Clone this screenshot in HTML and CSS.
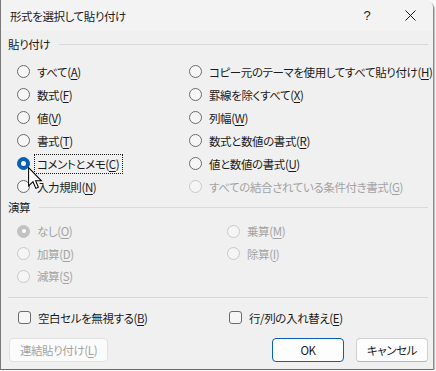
FILE: index.html
```html
<!DOCTYPE html>
<html lang="ja">
<head>
  <meta charset="UTF-8">
  <title>形式を選択して貼り付け</title>
  <link rel="stylesheet" href="styles.css">
</head>
<body>
  <div class="window">
    <div class="titlebar">
      <span class="title">形式を選択して貼り付け</span>
      <span class="help">?</span>
      <span class="close">
        <svg width="11" height="11" viewBox="0 0 11 11"><path d="M0.5 0.5 L10.5 10.5 M10.5 0.5 L0.5 10.5" stroke="#1a1a1a" stroke-width="1"/></svg>
      </span>
    </div>

    <div class="content">
      <div class="group-head"><span>貼り付け</span><i class="rule"></i></div>
      <div class="paste-grid">
        <label class="opt"><span class="radio"></span>すべて(<u>A</u>)</label>
        <label class="opt"><span class="radio"></span>コピー元のテーマを使用してすべて貼り付け(<u>H</u>)</label>
        <label class="opt"><span class="radio"></span>数式(<u>F</u>)</label>
        <label class="opt"><span class="radio"></span>罫線を除くすべて(<u>X</u>)</label>
        <label class="opt"><span class="radio"></span>値(<u>V</u>)</label>
        <label class="opt"><span class="radio"></span>列幅(<u>W</u>)</label>
        <label class="opt"><span class="radio"></span>書式(<u>T</u>)</label>
        <label class="opt"><span class="radio"></span>数式と数値の書式(<u>R</u>)</label>
        <label class="opt"><span class="radio checked"></span><span class="focus">コメントとメモ(<u>C</u>)</span></label>
        <label class="opt"><span class="radio"></span>値と数値の書式(<u>U</u>)</label>
        <label class="opt"><span class="radio"></span>入力規則(<u>N</u>)</label>
        <label class="opt disabled"><span class="radio"></span>すべての結合されている条件付き書式(<u>G</u>)</label>
      </div>

      <div class="group-head ops-head"><span>演算</span><i class="rule"></i></div>
      <div class="ops-grid">
        <label class="opt disabled"><span class="radio checked"></span>なし(<u>O</u>)</label>
        <label class="opt disabled"><span class="radio"></span>乗算(<u>M</u>)</label>
        <label class="opt disabled"><span class="radio"></span>加算(<u>D</u>)</label>
        <label class="opt disabled"><span class="radio"></span>除算(<u>I</u>)</label>
        <label class="opt disabled"><span class="radio"></span>減算(<u>S</u>)</label>
      </div>

      <i class="rule sep"></i>

      <div class="checks">
        <label class="opt"><span class="check"></span>空白セルを無視する(<u>B</u>)</label>
        <label class="opt"><span class="check"></span>行/列の入れ替え(<u>E</u>)</label>
      </div>

      <div class="buttons">
        <button class="btn link" disabled>連結貼り付け(<u>L</u>)</button>
        <span class="spacer"></span>
        <button class="btn ok">OK</button>
        <button class="btn">キャンセル</button>
      </div>
    </div>

    <svg class="cursor" width="15" height="23" viewBox="0 0 13 20">
      <path d="M0.5 0.5 L0.5 16.5 L4.3 12.8 L6.8 18.6 L9 17.6 L6.6 12 L11.6 12 Z" fill="#fff" stroke="#000" stroke-width="0.9" stroke-linejoin="miter"/>
    </svg>
  </div>
</body>
</html>
```

FILE: styles.css
```css
body { margin: 0; background: #f9f9f9; font-family: "Noto Sans CJK JP", "Noto Sans", sans-serif; font-size: 11.5px; font-feature-settings: "palt"; letter-spacing: -0.4px; color: #1b1b1b; }
u { text-decoration: underline; text-underline-offset: 2px; }

.window { position: relative; width: 432px; height: 369px; background: #f0f0f0; border-left: 1px solid #7a7a7a; border-bottom: 1px solid #6a6a6a; border-top-right-radius: 8px; box-shadow: 1px 1px 0 #8c8c8c, 2px 2px 1px rgba(0,0,0,0.25); overflow: hidden; }

.titlebar { height: 31px; display: flex; align-items: center; background: #f3f3f3; padding-left: 9px; }
.title { flex: 1; line-height: 16px; }
.help { width: 20px; text-align: center; font-family: "Liberation Sans", sans-serif; font-size: 13px; margin-right: 23px; }
.close { width: 20px; display: flex; justify-content: center; margin-right: 13px; }

.content { padding: 0 5px 0 7px; }
.group-head { display: flex; align-items: center; height: 18px; margin-top: 4px; line-height: 18px; }
.group-head span { margin-right: 9px; }
.rule { display: block; flex: 1; height: 1px; background: #d9d9d9; }
.ops-head { margin-top: 0; }

.opt { display: flex; align-items: center; white-space: nowrap; line-height: 16px; }
.opt.disabled { color: #a3a3a3; }

.paste-grid { display: grid; grid-template-columns: 172px 1fr; grid-auto-rows: 23px; padding-left: 9px; margin-top: 7px; }
.ops-grid { display: grid; grid-template-columns: 210px 1fr; grid-auto-rows: 22.5px; padding-left: 9px; margin-top: 4px; }

.radio { width: 11px; height: 11px; border: 1px solid #6b6b6b; border-radius: 50%; background: #f6f6f6; margin-right: 7px; flex: none; display: flex; align-items: center; justify-content: center; }
.radio.checked { background: #0a5fb4; border-color: #0a5fb4; }
.radio.checked::after { content: ""; width: 5px; height: 5px; border-radius: 50%; background: #fff; }
.disabled .radio { border-color: #c9c9c9; background: #f5f5f5; }
.disabled .radio.checked { background: #c2c2c2; border-color: #c2c2c2; }
.disabled .radio.checked::after { width: 4px; height: 4px; }

.focus { outline: 1px dotted #1b1b1b; outline-offset: 1px; padding: 0 2px 0 1px; margin-left: -1px; }

.sep { flex: none; margin-top: 9px; }

.checks { display: grid; grid-template-columns: 211px 1fr; height: 20px; padding-left: 10px; margin-top: 10px; }
.check { width: 11px; height: 11px; border: 1px solid #6b6b6b; border-radius: 3px; background: #f6f6f6; margin-right: 7px; flex: none; }

.buttons { display: flex; margin-top: 10px; padding-left: 1px; }
.spacer { flex: 1; }
.btn { height: 24px; width: 72px; font: inherit; letter-spacing: inherit; color: #1b1b1b; background: #fdfdfd; border: 1px solid #d0d0d0; border-bottom-color: #b5b5b5; border-radius: 4px; padding: 0; line-height: 20px; }
.btn.ok { border-color: #0a5fb4; margin-right: 12px; }
.btn.link { width: 99px; color: #a3a3a3; background: #fbfbfb; border-color: #e1e1e1; }

.cursor { position: absolute; left: 27px; top: 167px; }
```
